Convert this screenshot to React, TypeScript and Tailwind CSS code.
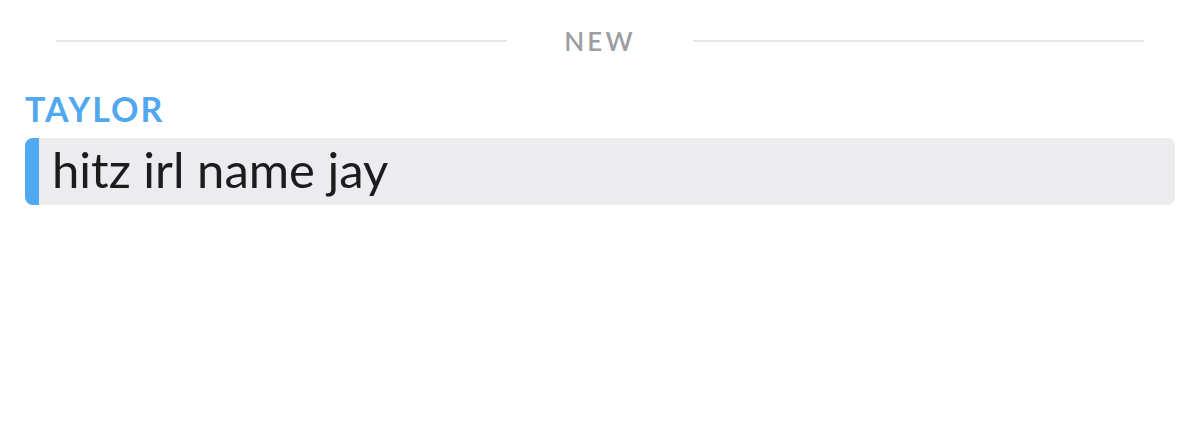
import React from 'react';

const font = { fontFamily: 'Lato, "Noto Sans", sans-serif' };

export default function App() {
  return (
    <div className="w-[1200px] h-[427px] bg-white" style={font}>
      <div className="flex items-center px-[56px] pt-[23px] h-[58px]">
        <div className="flex-1 h-[2px] bg-[#e7e7e9]" />
        <span className="mx-[57px] text-[26px] font-semibold tracking-[0.12em] text-[#9c9ea2] leading-none">NEW</span>
        <div className="flex-1 h-[2px] bg-[#e7e7e9]" />
      </div>
      <div className="px-[25px] pt-[34px]">
        <div className="text-[34px] font-bold tracking-[0.06em] text-[#50a8f1] leading-none">TAYLOR</div>
        <div className="mt-[12px] flex h-[67px] rounded-[8px] bg-[#ececee] overflow-hidden">
          <div className="w-[14px] bg-[#4fa9f3]" />
          <div className="pl-[13px] text-[49px] text-[#1c1c1e] leading-[62px]">hitz irl name jay</div>
        </div>
      </div>
    </div>
  );
}
